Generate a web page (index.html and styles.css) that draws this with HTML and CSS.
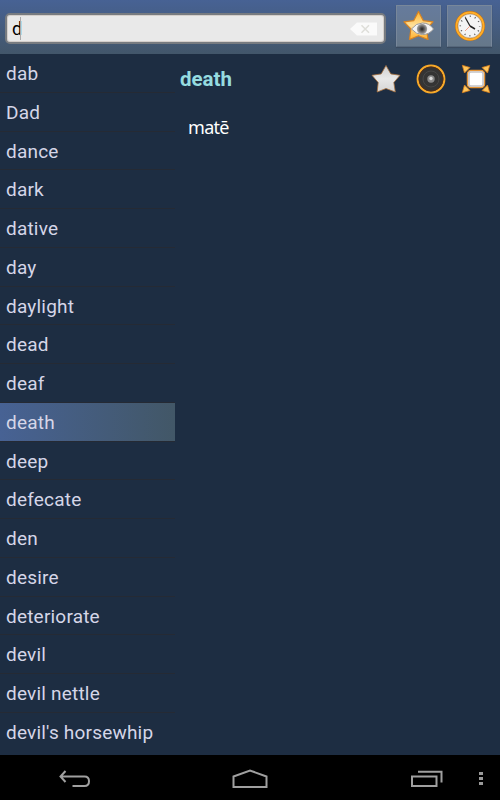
FILE: index.html
```html
<!DOCTYPE html>
<html lang="en">
<head>
    <meta charset="utf-8">
    <title>Dictionary</title>
    <link rel="stylesheet" href="styles.css">
</head>
<body>
    <div class="header">
        <div class="search">
            <span class="search-text">d</span><span class="cursor"></span>
            <svg class="clear" width="28" height="14" viewBox="0 0 28 14">
                <path d="M0 7 L7 .5 H27 V13.500 H7 Z" fill="#fafafa"/>
                <path d="M11.500 3.200 L19 10.700 M19 3.200 L11.500 10.700" stroke="#deded9" stroke-width="1.500"/>
            </svg>
        </div>
        <button class="button">
            <svg width="32" height="32" viewBox="0 0 32 32">
                <defs>
                    <linearGradient id="gold" x1="0" y1="0" x2="0" y2="1">
                        <stop offset="0" stop-color="#ffb52c"/>
                        <stop offset=".5" stop-color="#ffe09a"/>
                        <stop offset="1" stop-color="#ffb02c"/>
                    </linearGradient>
                    <radialGradient id="iris">
                        <stop offset="0" stop-color="#222"/>
                        <stop offset=".4" stop-color="#555"/>
                        <stop offset="1" stop-color="#aaa"/>
                    </radialGradient>
                </defs>
                <path d="M15.500 1.500 L20.300 10.700 L30 11.800 L23.400 19 L25 29.500 L15.500 25.700 L6.500 29.500 L7.900 19 L1 11.800 L10.700 10.700 Z" fill="url(#gold)" stroke="#d98420" stroke-width="1.200" stroke-linejoin="round"/>
                <path d="M8.500 19 Q13 13 19.500 13 Q26.500 13 30.500 19 Q26.500 24.500 19.500 24.500 Q13 24.500 8.500 19 Z" fill="#f3f3f3" stroke="#999" stroke-width="1"/>
                <circle cx="19" cy="19" r="5.200" fill="url(#iris)"/>
            </svg>
        </button>
        <button class="button">
            <svg width="32" height="32" viewBox="0 0 32 32">
                <circle cx="16" cy="16" r="13.500" fill="#f4f4f4" stroke="#c46d12" stroke-width="3"/>
                <circle cx="16" cy="16" r="13.500" fill="none" stroke="#ffae27" stroke-width="2"/>
                <circle cx="16" cy="16" r="11.900" fill="none" stroke="#b9a88c" stroke-width=".6"/>
                <circle cx="16" cy="16" r="9.700" fill="none" stroke="#555" stroke-width="1.500" stroke-dasharray="1 4.079" stroke-dashoffset=".5"/>
                <path d="M16 16 L11.500 8" stroke="#222" stroke-width="1.200"/>
                <path d="M16 16 L21 19" stroke="#222" stroke-width="1.500"/>
                <path d="M16 16 L11 21" stroke="#f09a80" stroke-width=".9"/>
            </svg>
        </button>
    </div>

    <div class="content">
        <ul class="words">
            <li>dab</li>
            <li>Dad</li>
            <li>dance</li>
            <li>dark</li>
            <li>dative</li>
            <li>day</li>
            <li>daylight</li>
            <li>dead</li>
            <li>deaf</li>
            <li class="selected">death</li>
            <li>deep</li>
            <li>defecate</li>
            <li>den</li>
            <li>desire</li>
            <li>deteriorate</li>
            <li>devil</li>
            <li>devil nettle</li>
            <li>devil's horsewhip</li>
        </ul>
        <div class="article">
            <div class="article-head">
                <h1>death</h1>
                <div class="actions">
                    <svg width="30" height="30" viewBox="0 0 30 30">
                        <defs>
                            <linearGradient id="silver" x1="0" y1="0" x2="0" y2="1">
                                <stop offset="0" stop-color="#cfcfcf"/>
                                <stop offset=".5" stop-color="#e8e8e8"/>
                                <stop offset="1" stop-color="#d5d5d5"/>
                            </linearGradient>
                        </defs>
                        <path d="M15 1.500 L19.800 9.900 L29 11.300 L22.800 18.500 L24.300 28 L15 24.500 L6.200 28 L7.200 18.500 L1 11.300 L10.200 9.900 Z" fill="url(#silver)" stroke="#a9713c" stroke-width=".8" stroke-linejoin="round"/>
                    </svg>
                    <svg width="30" height="30" viewBox="0 0 30 30">
                        <circle cx="15" cy="15" r="13.400" fill="#343434" stroke="#f9a928" stroke-width="2"/>
                        <circle cx="15" cy="15" r="12" fill="none" stroke="#5a2d0d" stroke-width=".8"/>
                        <circle cx="15" cy="15" r="8" fill="none" stroke="#474747" stroke-width="1"/>
                        <circle cx="15" cy="15" r="3.700" fill="#8b8b8b"/>
                        <circle cx="15" cy="14.500" r="1.700" fill="#ddd"/>
                    </svg>
                    <svg width="30" height="30" viewBox="0 0 30 30">
                        <g fill="#ffc65b" stroke="#d47b18" stroke-width=".8" stroke-linejoin="round">
                            <path d="M1.300 1.300 L9 3.500 L3.500 9 Z"/>
                            <path d="M28.700 1.300 L26.500 9 L21 3.500 Z"/>
                            <path d="M1.300 28.700 L3.500 21 L9 26.500 Z"/>
                            <path d="M28.700 28.700 L21 26.500 L26.500 21 Z"/>
                        </g>
                        <rect x="6.500" y="6.500" width="17" height="17" rx="3.500" fill="#fff" stroke="#e59435" stroke-width="1.500"/>
                        <rect x="8" y="8" width="14" height="14" rx="2" fill="none" stroke="#c4c4c8" stroke-width="1.500"/>
                    </svg>
                </div>
            </div>
            <p class="translation">matē</p>
        </div>
    </div>

    <div class="navbar">
        <svg width="32" height="18" viewBox="0 0 32 18">
            <path d="M6.500 1 L1.500 6.500 L6.500 12 M1.500 6.500 H25.500 Q30 6.500 30 11.200 Q30 16 25.500 16 H13.500"/>
        </svg>
        <svg width="36" height="20" viewBox="0 0 36 20">
            <path d="M1.500 18 V7.500 L18 1.500 L34.500 7.500 V18 Z"/>
        </svg>
        <svg width="34" height="18" viewBox="0 0 34 18">
            <path d="M2 6.500 H26.500 V16 H2 Z M8 1.700 H31.500 V12.500"/>
        </svg>
        <svg class="more" width="4" height="14" viewBox="0 0 4 14">
            <path d="M0 0 H4 V3 H0 Z M0 5 H4 V8 H0 Z M0 10 H4 V13 H0 Z"/>
        </svg>
    </div>
</body>
</html>
```
FILE: styles.css
```css
* {
    box-sizing: border-box;
}
body {
    margin: 0;
    width: 500px;
    height: 800px;
    display: flex;
    flex-direction: column;
    overflow: hidden;
    background-color: #1d2d42;
    font-family: Roboto, Arial, sans-serif;
}
svg {
    display: block;
}
.header {
    display: flex;
    height: 54px;
    padding: 5px 8px 0 5px;
    background: linear-gradient(#476294, #42566a);
}
.search {
    display: flex;
    flex-shrink: 0;
    align-items: center;
    width: 381px;
    height: 31px;
    margin: 8px 10px 0 0;
    padding: 0 6px 0 5px;
    background-color: #e9e9e9;
    border: 2px solid #777b80;
    border-radius: 5px;
    box-shadow: inset 0 0 0 1px #d4cfcb;
}
.search-text {
    width: 8px;
    font-size: 18px;
    letter-spacing: -1px;
    color: #000;
}
.cursor {
    width: 1px;
    height: 23px;
    background-color: #aaa;
}
.clear {
    margin-left: auto;
}
.button {
    display: flex;
    flex-shrink: 0;
    align-items: center;
    justify-content: center;
    width: 45px;
    height: 42px;
    margin: 0 6px 0 0;
    padding: 0;
    border: 1px solid #78879a;
    border-bottom-color: #56677b;
    background: linear-gradient(#667b9c, #66788a);
    box-shadow: 0 1px 1px #3a4a5e;
}
.button svg {
    flex-shrink: 0;
}
.content {
    display: flex;
    height: 701px;
}
.words {
    width: 175px;
    margin: 0;
    padding: 0;
    list-style: none;
}
.words li {
    height: 38.75px;
    padding-left: 6px;
    border-bottom: 1px solid #252a34;
    font-size: 19px;
    line-height: 40px;
    letter-spacing: 0.2px;
    color: #d5d6e8;
    white-space: nowrap;
}
.words .selected {
    background: linear-gradient(to right, #476294, #425767);
}
.words li:last-child {
    border-bottom: none;
}
.article {
    flex: 1;
    padding: 10px 9px 0 5px;
}
.article-head {
    display: flex;
    align-items: center;
    justify-content: space-between;
}
h1 {
    margin: 0;
    font-size: 20.5px;
    line-height: 30px;
    color: #96dce0;
}
.actions {
    display: flex;
    gap: 15px;
}
.translation {
    margin: 21px 0 0 8px;
    font-family: "Noto Sans", sans-serif;
    font-size: 18px;
    line-height: 24px;
    letter-spacing: -0.7px;
    color: #fff;
}
.navbar {
    display: flex;
    align-items: center;
    height: 45px;
    padding: 2px 17px 0 59px;
    justify-content: space-between;
    background-color: #000;
}
.navbar svg {
    fill: none;
    stroke: #a0a0a0;
    stroke-width: 2;
}
.navbar .more {
    margin-left: -106px;
    fill: #999;
    stroke: none;
}
```
